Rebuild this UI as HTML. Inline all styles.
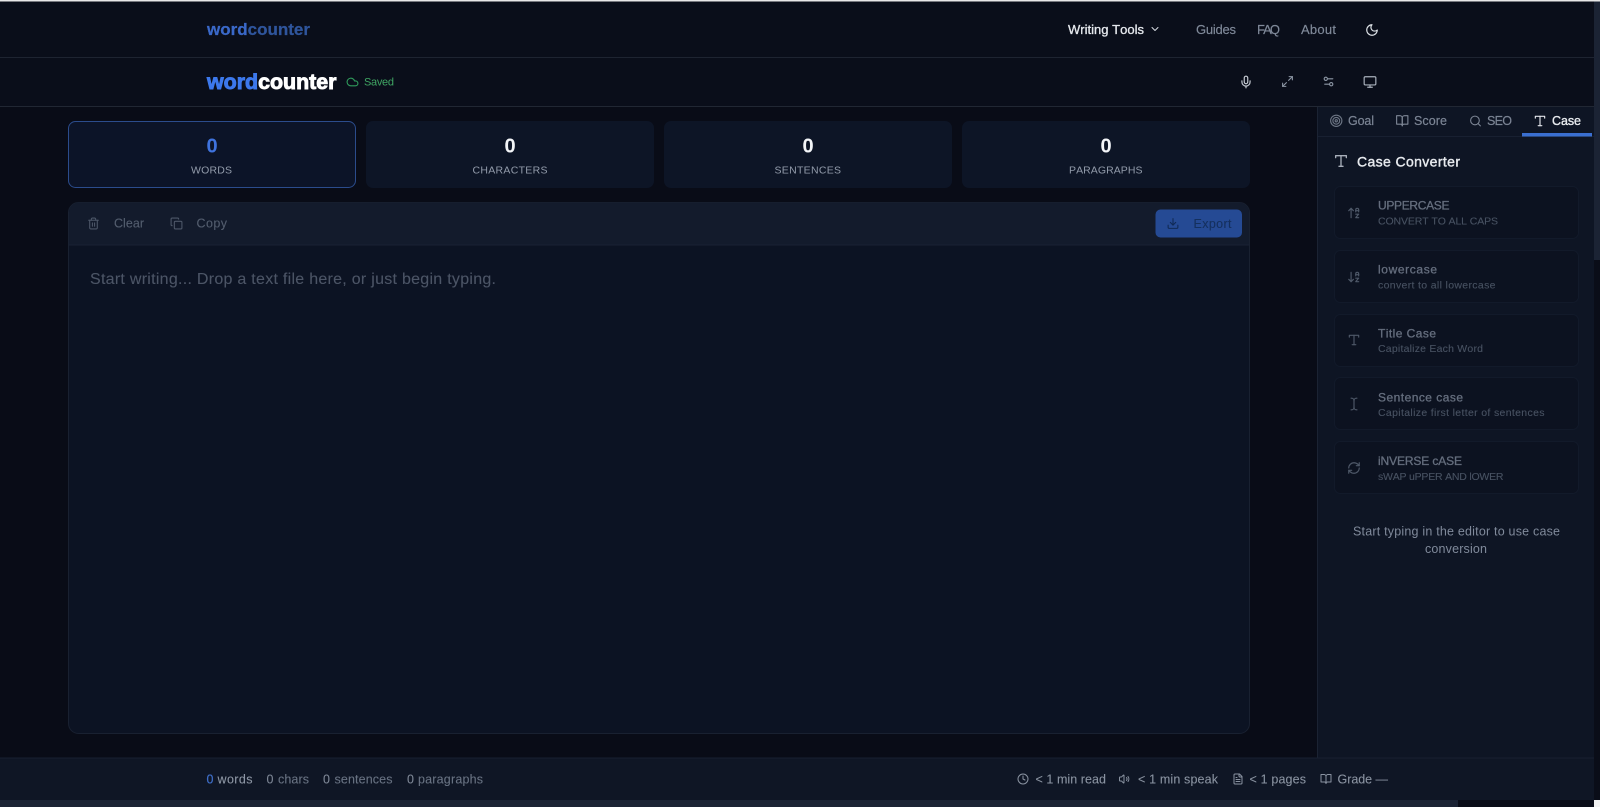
<!DOCTYPE html>
<html lang="en"><head><meta charset="utf-8"><title>wordcounter</title>
<style>
html,body{margin:0;padding:0;width:1600px;height:807px;overflow:hidden;background:#090c17}
svg{display:block}
text{font-family:"Liberation Sans",sans-serif;font-kerning:none}
.i{fill:none;stroke-width:2;stroke-linecap:round;stroke-linejoin:round}
</style></head><body>
<svg xmlns="http://www.w3.org/2000/svg" width="1600" height="807" viewBox="0 0 1600 807">
<defs>
<symbol id="moon" viewBox="0 0 24 24"><path d="M12 3a6 6 0 0 0 9 9 9 9 0 1 1-9-9Z"/></symbol>
<symbol id="chev" viewBox="0 0 24 24"><path d="m6 9 6 6 6-6"/></symbol>
<symbol id="mic" viewBox="0 0 24 24"><path d="M12 2a3 3 0 0 0-3 3v7a3 3 0 0 0 6 0V5a3 3 0 0 0-3-3Z"/><path d="M19 10v2a7 7 0 0 1-14 0v-2"/><path d="M12 19v3"/></symbol>
<symbol id="max" viewBox="0 0 24 24"><path d="M15 3h6v6"/><path d="M9 21H3v-6"/><path d="M21 3l-7 7"/><path d="M3 21l7-7"/></symbol>
<symbol id="sliders" viewBox="0 0 24 24"><path d="M20 7h-9"/><path d="M14 17H5"/><circle cx="17" cy="17" r="3"/><circle cx="7" cy="7" r="3"/></symbol>
<symbol id="monitor" viewBox="0 0 24 24"><rect x="2" y="3" width="20" height="14" rx="2"/><path d="M8 21h8"/><path d="M12 17v4"/></symbol>
<symbol id="target" viewBox="0 0 24 24"><circle cx="12" cy="12" r="10"/><circle cx="12" cy="12" r="6"/><circle cx="12" cy="12" r="2"/></symbol>
<symbol id="book" viewBox="0 0 24 24"><path d="M2 3h6a4 4 0 0 1 4 4v14a3 3 0 0 0-3-3H2z"/><path d="M22 3h-6a4 4 0 0 0-4 4v14a3 3 0 0 1 3-3h7z"/></symbol>
<symbol id="search" viewBox="0 0 24 24"><circle cx="11" cy="11" r="8"/><path d="m21 21-4.3-4.3"/></symbol>
<symbol id="type" viewBox="0 0 24 24"><path d="M4 7V4h16v3"/><path d="M9 20h6"/><path d="M12 4v16"/></symbol>
<symbol id="cloud" viewBox="0 0 24 24"><path d="M17.5 19H9a7 7 0 1 1 6.71-9h1.79a4.5 4.5 0 1 1 0 9Z"/></symbol>
<symbol id="trash" viewBox="0 0 24 24"><path d="M3 6h18"/><path d="M19 6v14c0 1-1 2-2 2H7c-1 0-2-1-2-2V6"/><path d="M8 6V4c0-1 1-2 2-2h4c1 0 2 1 2 2v2"/><path d="M10 11v6"/><path d="M14 11v6"/></symbol>
<symbol id="copy" viewBox="0 0 24 24"><rect x="8" y="8" width="14" height="14" rx="2"/><path d="M4 16c-1.100 0-2-.9-2-2V4c0-1.100.9-2 2-2h10c1.100 0 2 .9 2 2"/></symbol>
<symbol id="dl" viewBox="0 0 24 24"><path d="M21 15v4a2 2 0 0 1-2 2H5a2 2 0 0 1-2-2v-4"/><path d="m7 10 5 5 5-5"/><path d="M12 15V3"/></symbol>
<symbol id="up" viewBox="0 0 24 24"><path d="m3 8 4-4 4 4"/><path d="M7 4v16"/><path d="M20 8h-5"/><path d="M15 10V6.500a2.500 2.500 0 0 1 5 0V10"/><path d="M15 14h5l-5 6h5"/></symbol>
<symbol id="down" viewBox="0 0 24 24"><path d="m3 16 4 4 4-4"/><path d="M7 20V4"/><path d="M20 8h-5"/><path d="M15 10V6.500a2.500 2.500 0 0 1 5 0V10"/><path d="M15 14h5l-5 6h5"/></symbol>
<symbol id="cursor" viewBox="0 0 24 24"><path d="M17 22h-1a4 4 0 0 1-4-4V6a4 4 0 0 1 4-4h1"/><path d="M7 22h1a4 4 0 0 0 4-4v-1"/><path d="M7 2h1a4 4 0 0 1 4 4v1"/></symbol>
<symbol id="refresh" viewBox="0 0 24 24"><path d="M3 12a9 9 0 0 1 9-9 9.750 9.750 0 0 1 6.740 2.740L21 8"/><path d="M21 3v5h-5"/><path d="M21 12a9 9 0 0 1-9 9 9.750 9.750 0 0 1-6.740-2.740L3 16"/><path d="M8 16H3v5"/></symbol>
<symbol id="clock" viewBox="0 0 24 24"><circle cx="12" cy="12" r="10"/><path d="M12 6v6l4 2"/></symbol>
<symbol id="vol" viewBox="0 0 24 24"><path d="M11 4.702a.705.705 0 0 0-1.203-.498L6.413 7.587A1.400 1.400 0 0 1 5.416 8H3a1 1 0 0 0-1 1v6a1 1 0 0 0 1 1h2.416a1.400 1.400 0 0 1 .997.413l3.383 3.384A.705.705 0 0 0 11 19.298z"/><path d="M16 9a5 5 0 0 1 0 6"/><path d="M19 7a8 8 0 0 1 0 10"/></symbol>
<symbol id="file" viewBox="0 0 24 24"><path d="M15 2H6a2 2 0 0 0-2 2v16a2 2 0 0 0 2 2h12a2 2 0 0 0 2-2V7Z"/><path d="M14 2v4a2 2 0 0 0 2 2h4"/><path d="M10 9H8"/><path d="M16 13H8"/><path d="M16 17H8"/></symbol>
</defs>

<!-- page -->
<rect width="1600" height="807" fill="#090c17"/>
<rect x="0" y="2" width="1594" height="104" fill="#0a0e1a"/>
<rect x="0" y="0" width="1600" height="1.500" fill="#e8e8e8"/>
<rect x="0" y="57" width="1594" height="1" fill="#1e2431"/>
<rect x="0" y="106" width="1594" height="1" fill="#212733"/>

<!-- top nav -->
<text x="207" y="35" font-size="17" font-weight="700" stroke-width=".25" textLength="103" lengthAdjust="spacingAndGlyphs"><tspan fill="#3a68c8" stroke="#3a68c8">word</tspan><tspan fill="#2f559c" stroke="#2f559c">counter</tspan></text>
<text x="1068" y="34" font-size="13" fill="#e6e9ee" textLength="76" stroke="#e6e9ee" stroke-width=".3">Writing Tools</text>
<use href="#chev" x="1149" y="23" width="12" height="12" class="i" stroke="#d5d9e0"/>
<g font-size="13" fill="#808a9a" stroke="#808a9a" stroke-width=".15">
<text x="1196" y="34" textLength="40">Guides</text>
<text x="1257" y="34" textLength="23">FAQ</text>
<text x="1301" y="34" textLength="35">About</text>
</g>
<use href="#moon" x="1365" y="23" width="14" height="14" class="i" stroke="#dfe3e8"/>

<!-- secondary header -->
<text x="207" y="89" font-size="21" font-weight="700" stroke-width=".9" textLength="129.500" lengthAdjust="spacingAndGlyphs"><tspan fill="#3c78ec" stroke="#3c78ec">word</tspan><tspan fill="#fff" stroke="#fff">counter</tspan></text>
<use href="#cloud" x="346" y="75.500" width="13" height="13" class="i" stroke="#2f9c5c"/>
<text x="364" y="85.500" font-size="11" fill="#3fa563" textLength="30">Saved</text>
<use href="#mic" x="1239" y="75" width="14" height="14" class="i" stroke="#c8cdd5"/>
<use href="#max" x="1281" y="75" width="13" height="13" class="i" stroke="#8d97a5"/>
<use href="#sliders" x="1322" y="75" width="13" height="13" class="i" stroke="#8d97a5"/>
<use href="#monitor" x="1363" y="75" width="14" height="14" class="i" stroke="#a9b1bc"/>

<!-- stat cards -->
<rect x="68.500" y="121.500" width="287" height="66" rx="7" fill="#0c1428" stroke="#2b4c8c"/>
<rect x="366" y="121" width="288" height="67" rx="7" fill="#0d1526"/>
<rect x="664" y="121" width="288" height="67" rx="7" fill="#0d1526"/>
<rect x="962" y="121" width="288" height="67" rx="7" fill="#0d1526"/>
<g text-anchor="middle" font-size="20" font-weight="700">
<text x="212" y="152.500" fill="#3f73de">0</text>
<text x="510" y="152.500" fill="#f3f5f8">0</text>
<text x="808" y="152.500" fill="#f3f5f8">0</text>
<text x="1106" y="152.500" fill="#f3f5f8">0</text>
</g>
<g font-size="10.500" fill="#939cab">
<text x="191" y="173.500" textLength="41">WORDS</text>
<text x="472.500" y="173.500" textLength="75">CHARACTERS</text>
<text x="774.500" y="173.500" textLength="66.500">SENTENCES</text>
<text x="1069" y="173.500" textLength="73.500">PARAGRAPHS</text>
</g>

<!-- editor -->
<rect x="68.500" y="202.500" width="1181" height="531" rx="10" fill="#0c1323" stroke="#192131"/>
<path d="M69 245V212.500a10 10 0 0 1 10-10H1239a10 10 0 0 1 10 10V245Z" fill="#131b2c"/>
<rect x="69" y="244.500" width="1180" height="1" fill="#1a2233"/>
<use href="#trash" x="87" y="217" width="13" height="13" class="i" stroke="#4d5768"/>
<text x="114" y="227.500" font-size="12.500" fill="#535d6e" stroke="#535d6e" stroke-width=".12" textLength="30">Clear</text>
<use href="#copy" x="170" y="217" width="13" height="13" class="i" stroke="#4d5768"/>
<text x="196.500" y="227.500" font-size="12.500" fill="#535d6e" stroke="#535d6e" stroke-width=".12" textLength="30.500">Copy</text>
<rect x="1155.500" y="209.500" width="86.500" height="28" rx="5" fill="#254a94"/>
<use href="#dl" x="1166.500" y="217" width="13" height="13" class="i" stroke="#102a55"/>
<text x="1193.500" y="228" font-size="12.500" fill="#15305e" stroke="#15305e" stroke-width=".12" textLength="38">Export</text>
<text x="90" y="284" font-size="16" fill="#4c5566" stroke="#4c5566" stroke-width=".1" textLength="406">Start writing... Drop a text file here, or just begin typing.</text>

<!-- sidebar -->
<rect x="1317" y="107" width="277" height="651" fill="#0e1524"/>
<rect x="1317" y="107" width="1" height="651" fill="#1b2333"/>
<rect x="1318" y="136" width="276" height="1" fill="#182031"/>
<use href="#target" x="1329.500" y="114" width="13.500" height="13.500" class="i" stroke="#6d7685"/>
<text x="1348" y="125" font-size="12.500" fill="#7b8494" stroke="#7b8494" stroke-width=".2" textLength="26">Goal</text>
<use href="#book" x="1395.500" y="114" width="13.500" height="13.500" class="i" stroke="#7d8695"/>
<text x="1414" y="125" font-size="12.500" fill="#7b8494" stroke="#7b8494" stroke-width=".2" textLength="33">Score</text>
<use href="#search" x="1469" y="114.500" width="13" height="13" class="i" stroke="#7d8695"/>
<text x="1487" y="125" font-size="12.500" fill="#7b8494" stroke="#7b8494" stroke-width=".2" textLength="25">SEO</text>
<use href="#type" x="1533" y="114" width="14" height="14" class="i" stroke="#e2e5ea"/>
<text x="1552" y="125" font-size="12.500" fill="#e8ebef" stroke="#e8ebef" stroke-width=".35" textLength="29">Case</text>
<rect x="1522" y="133" width="70" height="3.500" fill="#3a6fd0"/>

<use href="#type" x="1333" y="153" width="16" height="16" class="i" stroke="#a8afba"/>
<text x="1357" y="166.500" font-size="14" fill="#e8ebef" stroke="#e8ebef" stroke-width=".4" textLength="103">Case Converter</text>

<g fill="#0c1220" stroke="#121a2a">
<rect x="1334.500" y="186.500" width="244" height="52" rx="6"/>
<rect x="1334.500" y="250.500" width="244" height="52" rx="6"/>
<rect x="1334.500" y="314.500" width="244" height="52" rx="6"/>
<rect x="1334.500" y="377.500" width="244" height="52" rx="6"/>
<rect x="1334.500" y="441.500" width="244" height="52" rx="6"/>
</g>
<use href="#up" x="1347" y="206" width="14" height="14" class="i" stroke="#4e5868"/>
<use href="#down" x="1347" y="270" width="14" height="14" class="i" stroke="#4e5868"/>
<use href="#type" x="1347" y="333" width="14" height="14" class="i" stroke="#4e5868"/>
<use href="#cursor" x="1347" y="397" width="14" height="14" class="i" stroke="#4e5868"/>
<use href="#refresh" x="1347" y="461" width="14" height="14" class="i" stroke="#4e5868"/>
<g font-size="12" fill="#656e7e" stroke="#656e7e" stroke-width=".3">
<text x="1378" y="209.500" textLength="71.500">UPPERCASE</text>
<text x="1378" y="273.500" textLength="59">lowercase</text>
<text x="1378" y="337.500" textLength="58">Title Case</text>
<text x="1378" y="401.500" textLength="85">Sentence case</text>
<text x="1378" y="465" textLength="84">iNVERSE cASE</text>
</g>
<g font-size="10.500" fill="#485262" stroke="#485262" stroke-width=".1">
<text x="1378" y="224.500" textLength="120">CONVERT TO ALL CAPS</text>
<text x="1378" y="288.500" textLength="117.500">convert to all lowercase</text>
<text x="1378" y="352" textLength="105">Capitalize Each Word</text>
<text x="1378" y="416" textLength="166.500">Capitalize first letter of sentences</text>
<text x="1378" y="480" textLength="125.500">sWAP uPPER AND lOWER</text>
</g>
<text x="1353" y="535.500" font-size="12.500" fill="#808a9b" textLength="207">Start typing in the editor to use case</text>
<text x="1425" y="553" font-size="12.500" fill="#808a9b" textLength="62">conversion</text>

<!-- footer -->
<rect x="0" y="758" width="1594" height="42" fill="#0f1625"/>
<rect x="0" y="757.500" width="1594" height="1" fill="#182031"/>
<g font-size="12.500" fill="#687282" stroke="#687282" stroke-width=".1">
<text x="206.500" y="783.500" fill="#3f6fca" stroke="#3f6fca" stroke-width=".2" textLength="7.500">0</text>
<text x="217.500" y="783.500" fill="#8e97a5" stroke="#8e97a5" textLength="35">words</text>
<text x="266.500" y="783.500" fill="#7e8796" stroke="#7e8796" textLength="7.500">0</text>
<text x="278" y="783.500" textLength="31">chars</text>
<text x="323" y="783.500" fill="#7e8796" stroke="#7e8796" textLength="7.500">0</text>
<text x="334.500" y="783.500" textLength="58">sentences</text>
<text x="407" y="783.500" fill="#7e8796" stroke="#7e8796" textLength="7.500">0</text>
<text x="418" y="783.500" textLength="65">paragraphs</text>
</g>
<g font-size="12.500" fill="#8a93a1" stroke="#8a93a1" stroke-width=".1">
<text x="1035.500" y="783.500" textLength="70.500">&lt; 1 min read</text>
<text x="1138" y="783.500" textLength="80">&lt; 1 min speak</text>
<text x="1249.500" y="783.500" textLength="56.500">&lt; 1 pages</text>
<text x="1337.500" y="783.500" textLength="50.500">Grade —</text>
</g>
<use href="#clock" x="1017" y="773" width="12" height="12" class="i" stroke="#8a93a1"/>
<use href="#vol" x="1118.500" y="773" width="12" height="12" class="i" stroke="#8a93a1"/>
<use href="#file" x="1232" y="773" width="12" height="12" class="i" stroke="#8a93a1"/>
<use href="#book" x="1320" y="773" width="12" height="12" class="i" stroke="#8a93a1"/>

<!-- scrollbars -->
<rect x="1594" y="1.500" width="6" height="799" fill="#0a0d18"/>
<rect x="1594" y="1.500" width="6" height="258.500" fill="#1b2334"/>
<rect x="0" y="800" width="1594" height="7" fill="#0a0d18"/>
<rect x="0" y="800" width="1458" height="7" fill="#1b2334"/>
<rect x="1594" y="800" width="6" height="7" fill="#f2f2f2"/>
</svg>
</body></html>
